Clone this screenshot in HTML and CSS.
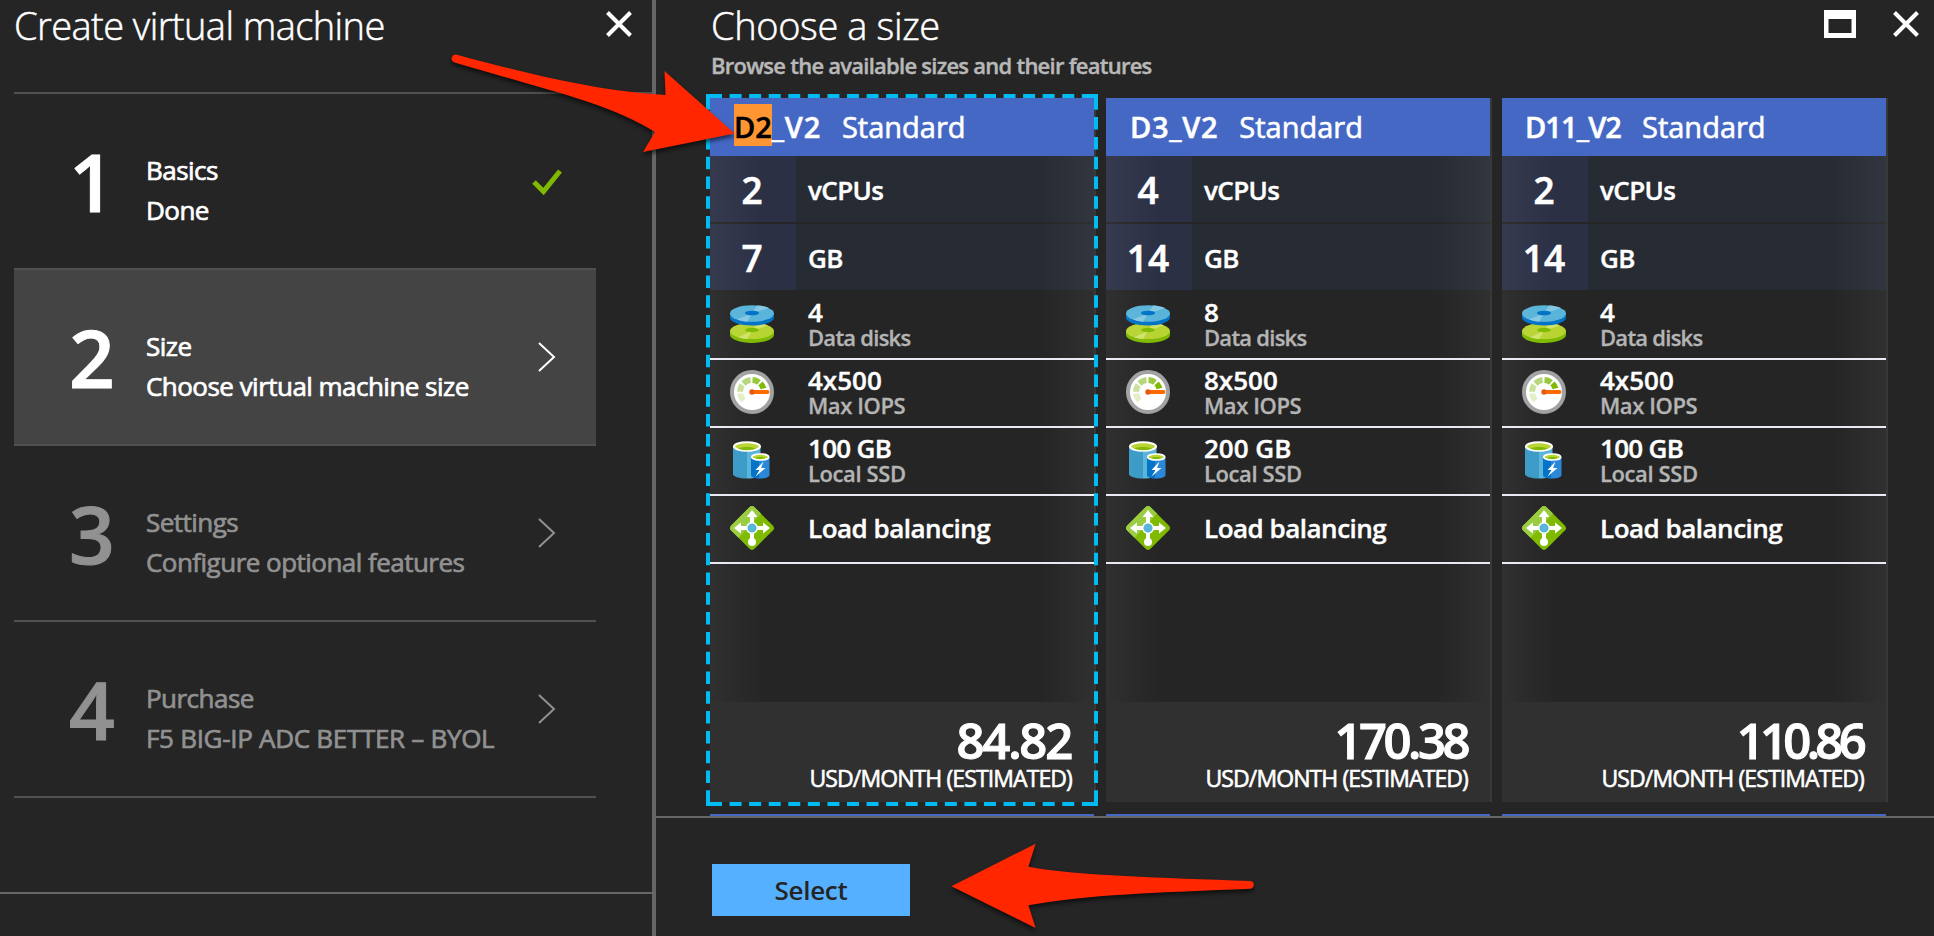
FILE: index.html
```html
<!DOCTYPE html>
<html lang="en">
<head>
<meta charset="utf-8">
<title>Create virtual machine</title>
<link rel="stylesheet" href="styles.css">
</head>
<body>
<svg class="defs" width="0" height="0" aria-hidden="true">
  <symbol id="i-close" viewBox="0 0 26 26"><path d="M1.500 1.500l23 23M24.500 1.500l-23 23" fill="none" stroke="#fff" stroke-width="4"/></symbol>
  <symbol id="i-chevron" viewBox="0 0 18 30"><path d="M1 1l15 14L1 29" fill="none" stroke="currentColor" stroke-width="2"/></symbol>
  <symbol id="i-disks" viewBox="0 0 44 38">
    <path d="M0 26v4c0 4 10 8 22 8s22-4 22-8v-4z" fill="#7fba00"/>
    <ellipse cx="22" cy="26" rx="22" ry="8" fill="#b8d432"/>
    <path d="M22 26L8 32.200c3 1 6 1.600 9 1.800zM22 26l5-7.800c4 .3 8 1 11 2z" fill="#cfe36c"/>
    <ellipse cx="22" cy="25" rx="7" ry="2.200" fill="#7fba00"/>
    <path d="M0 8.500v4C0 17 10 20.500 22 20.500S44 17 44 12.500v-4z" fill="#0072c6"/>
    <ellipse cx="22" cy="8.500" rx="22" ry="8.300" fill="#59b4d9"/>
    <path d="M22 8.500L7 14.500c3 1.200 6 1.800 10 2.200zM22 8.500L27 .4c5 .3 9 1.200 12 2.500z" fill="#85c8e4"/>
    <ellipse cx="22" cy="8" rx="7" ry="2.300" fill="#0072c6"/>
  </symbol>
  <symbol id="i-gauge" viewBox="0 0 44 44">
    <circle cx="22" cy="22" r="20" fill="#fff" stroke="#a0a1a2" stroke-width="4"/>
    <g fill="none" stroke-width="6">
      <path d="M13.500 30.500A12 12 0 0 1 10.100 23.500" stroke="#e2efc6"/>
      <path d="M10 21.800A12 12 0 0 1 12.200 15.100" stroke="#c8e09a"/>
      <path d="M13.500 13.500A12 12 0 0 1 20.500 10.100" stroke="#b5d779"/>
      <path d="M22.500 10A12 12 0 0 1 29 12.300" stroke="#97c83c"/>
      <path d="M30.500 13.500A12 12 0 0 1 33.500 18.500" stroke="#7fba00"/>
    </g>
    <path d="M22 22h15.500" stroke="#ff6a00" stroke-width="4" stroke-linecap="round"/>
    <circle cx="22" cy="22" r="2.700" fill="#e8590c"/>
  </symbol>
  <symbol id="i-storage" viewBox="0 0 44 44">
    <path d="M3 8v28c0 2.500 6 4.500 14 4.500V8z" fill="#3999c6"/>
    <path d="M17 8v32.500c8 0 13.500-2 13.500-4.500V8z" fill="#59b4d9"/>
    <ellipse cx="17" cy="8.500" rx="13" ry="4.300" fill="#b8d432" stroke="#fff" stroke-width="2"/>
    <path d="M8 10.500c4-2 14-2 18 0-4 2.300-14 2.300-18 0z" fill="#7fba00"/>
    <path d="M21 19v18c0 2 3.500 3.500 9 3.500S39.500 39 39.500 37V19z" fill="#2b88d8"/>
    <path d="M21 19v18c0 1.800 3 3.200 8 3.500V19z" fill="#0072c6"/>
    <ellipse cx="30.200" cy="19" rx="8.500" ry="3" fill="#b8d432" stroke="#fff" stroke-width="1.700"/>
    <path d="M25 20c3-1.200 8-1.200 10.500 0-3 1.300-8 1.300-10.500 0z" fill="#7fba00"/>
    <path d="M33.500 23.500L25.500 32h4l-4 6.500 10-8.500h-4.500z" fill="#fff"/>
  </symbol>
  <symbol id="i-balance" viewBox="0 0 44 44">
    <path d="M19.500 1.200a3.600 3.600 0 0 1 5 0L42.800 19.500a3.600 3.600 0 0 1 0 5L24.500 42.800a3.600 3.600 0 0 1-5 0L1.200 24.500a3.600 3.600 0 0 1 0-5z" fill="#7fba00"/>
    <path d="M19.500 1.200a3.600 3.600 0 0 1 5 0L31 7.500 8.500 31.800 1.200 24.500a3.600 3.600 0 0 1 0-5z" fill="#99cc40"/>
    <path d="M22 4l5.500 7H24v8h-4v-8h-3.500zM4 22l7-5.500V20h8v4h-8v3.500zM40 22l-7-5.500V20h-8v4h8v3.500z" fill="#fff"/>
    <path d="M22 24v10" stroke="#fff" stroke-width="4"/>
    <circle cx="22" cy="36" r="4" fill="#fff"/>
    <circle cx="22" cy="22" r="5.300" fill="#59b4d9" stroke="#fff" stroke-width="1.500"/>
  </symbol>
</svg>

<div class="portal">
  <section class="blade steps-blade">
    <header class="blade-head">
      <h1 class="title title-create">Create virtual machine</h1>
      <svg class="close"><use href="#i-close"/></svg>
    </header>
    <ol class="steps">
      <li class="step">
        <span class="num">1</span>
        <div class="label"><span>Basics</span><span>Done</span></div>
        <svg class="check" viewBox="0 0 30 26"><path d="M2 13l9.500 9.500L28 2" fill="none" stroke="#7fba00" stroke-width="5"/></svg>
      </li>
      <li class="step active">
        <span class="num">2</span>
        <div class="label"><span>Size</span><span>Choose virtual machine size</span></div>
        <svg class="chevron"><use href="#i-chevron"/></svg>
      </li>
      <li class="step disabled">
        <span class="num">3</span>
        <div class="label"><span>Settings</span><span>Configure optional features</span></div>
        <svg class="chevron"><use href="#i-chevron"/></svg>
      </li>
      <li class="step disabled">
        <span class="num">4</span>
        <div class="label"><span>Purchase</span><span class="product">F5 BIG-IP ADC BETTER – BYOL</span></div>
        <svg class="chevron"><use href="#i-chevron"/></svg>
      </li>
    </ol>
    <footer class="steps-foot"></footer>
  </section>

  <section class="blade size-blade">
    <header class="size-head">
      <div>
        <h1 class="title title-size">Choose a size</h1>
        <p class="subtitle">Browse the available sizes and their features</p>
      </div>
      <div class="window-tools">
        <svg class="maximize" viewBox="0 0 32 28"><path d="M0 0h32v28H0zM4.500 9v14h23V9z" fill="#fff" fill-rule="evenodd"/></svg>
        <svg class="close"><use href="#i-close"/></svg>
      </div>
    </header>

    <div class="cards">
      <article class="card">
        <h2 class="card-head"><b><mark>D2</mark>_V2</b><span>Standard</span></h2>
        <div class="card-body">
          <div class="spec"><span class="qty">2</span><span class="unit">vCPUs</span></div>
          <div class="spec"><span class="qty">7</span><span class="unit">GB</span></div>
          <div class="feature"><svg class="icon disks"><use href="#i-disks"/></svg><div><b>4</b><small class="tight">Data disks</small></div></div>
          <div class="feature"><svg class="icon"><use href="#i-gauge"/></svg><div><b>4x500</b><small>Max IOPS</small></div></div>
          <div class="feature"><svg class="icon"><use href="#i-storage"/></svg><div><b class="tight">100 GB</b><small>Local SSD</small></div></div>
          <div class="feature"><svg class="icon"><use href="#i-balance"/></svg><div><b class="snug">Load balancing</b></div></div>
        </div>
        <div class="price"><strong>84.82</strong><span>USD/MONTH (ESTIMATED)</span></div>
        <svg class="selection" viewBox="0 0 392 712">
          <g fill="none" stroke="#00bcf2" stroke-width="4">
            <path d="M4 2H388M4 710H388" stroke-dasharray="12 7.570"/>
            <path d="M2 3.300V709M390 3.300V709" stroke-dasharray="12.500 7.300"/>
            <path d="M0 2H5M2 0V5M387 2H392M390 0V5M0 710H5M2 707V712M387 710H392M390 707V712"/>
          </g>
        </svg>
      </article>

      <article class="card">
        <h2 class="card-head"><b>D3_V2</b><span>Standard</span></h2>
        <div class="card-body">
          <div class="spec"><span class="qty">4</span><span class="unit">vCPUs</span></div>
          <div class="spec"><span class="qty">14</span><span class="unit">GB</span></div>
          <div class="feature"><svg class="icon disks"><use href="#i-disks"/></svg><div><b>8</b><small class="tight">Data disks</small></div></div>
          <div class="feature"><svg class="icon"><use href="#i-gauge"/></svg><div><b>8x500</b><small>Max IOPS</small></div></div>
          <div class="feature"><svg class="icon"><use href="#i-storage"/></svg><div><b>200 GB</b><small>Local SSD</small></div></div>
          <div class="feature"><svg class="icon"><use href="#i-balance"/></svg><div><b class="snug">Load balancing</b></div></div>
        </div>
        <div class="price"><strong class="narrow-1">170.38</strong><span>USD/MONTH (ESTIMATED)</span></div>
      </article>

      <article class="card">
        <h2 class="card-head"><b class="long-name">D11_V2</b><span>Standard</span></h2>
        <div class="card-body">
          <div class="spec"><span class="qty">2</span><span class="unit">vCPUs</span></div>
          <div class="spec"><span class="qty">14</span><span class="unit">GB</span></div>
          <div class="feature"><svg class="icon disks"><use href="#i-disks"/></svg><div><b>4</b><small class="tight">Data disks</small></div></div>
          <div class="feature"><svg class="icon"><use href="#i-gauge"/></svg><div><b>4x500</b><small>Max IOPS</small></div></div>
          <div class="feature"><svg class="icon"><use href="#i-storage"/></svg><div><b class="tight">100 GB</b><small>Local SSD</small></div></div>
          <div class="feature"><svg class="icon"><use href="#i-balance"/></svg><div><b class="snug">Load balancing</b></div></div>
        </div>
        <div class="price"><strong class="narrow-2">110.86</strong><span>USD/MONTH (ESTIMATED)</span></div>
      </article>

      <div class="next-card"></div>
      <div class="next-card"></div>
      <div class="next-card"></div>
    </div>

    <footer class="size-foot"><button class="select" type="button">Select</button></footer>
  </section>

  <svg class="arrows" viewBox="0 0 1934 936" aria-hidden="true">
    <g fill="#ff2600">
      <path d="M457 54.700C520 72 600 92 665.500 95L664.500 71L734.600 133.500L643 152L655 132C610 103 540 88 454.500 62.500A4 4 0 0 1 457 54.700z"/>
      <path d="M951.400 886.300L1035.600 843.700L1028.400 866.700C1080 876 1160 877.500 1250.500 881A3.900 3.900 0 0 1 1250.500 888.700C1160 892.500 1085 894.500 1028.400 905.300L1035.600 928z"/>
    </g>
  </svg>
</div>
</body>
</html>
```

FILE: styles.css
```css
* { box-sizing: border-box; }
body { margin: 0; background: #252525; color: #fff; font-family: "Open Sans", "Noto Sans", sans-serif; overflow: hidden; }
h1, h2, p, ol { margin: 0; padding: 0; font-weight: 400; }
.defs { position: absolute; }
.portal { position: relative; display: flex; width: 1934px; height: 936px; overflow: hidden; }
.blade { display: flex; flex-direction: column; }
.steps-blade { width: 656px; border-right: 4px solid #666; }
.blade-head { display: flex; justify-content: space-between; height: 92px; padding: 0 20px 0 14px; }
.title { height: 52px; font-size: 38px; line-height: 50px; font-weight: 300; white-space: nowrap; -webkit-text-stroke: .5px currentColor; }
.title-create { letter-spacing: -.58px; }
.title-size { letter-spacing: -.38px; margin-left: -1px; }
.close { width: 26px; height: 26px; margin-top: 11px; }

.steps { list-style: none; margin-left: 14px; height: 800px; border-top: 2px solid #505050; }
.step { display: flex; width: 582px; height: 176px; border-bottom: 2px solid #505050; }
.num { width: 132px; padding-left: 55px; font-size: 80px; line-height: 174px; font-weight: 600; -webkit-text-stroke: 1px currentColor; }
.label { display: flex; flex-direction: column; width: 387px; padding-top: 56px; font-size: 26px; line-height: 40px; font-weight: 400; letter-spacing: -.53px; white-space: nowrap; -webkit-text-stroke: .7px currentColor; }
.product { letter-spacing: -.3px; }
.check { width: 30px; height: 26px; margin: 75px 0 0 -1px; }
.chevron { width: 18px; height: 30px; margin: 72px 0 0 5px; }
.active { background: #444; }
.disabled { color: #919191; }
.steps-foot { height: 44px; border-top: 2px solid #666; }

.size-blade { flex: 1; }
.size-head { display: flex; justify-content: space-between; height: 98px; padding: 0 15px 0 56px; }
.subtitle { margin-left: -1px; font-size: 22px; line-height: 27px; font-weight: 600; letter-spacing: -.75px; color: #b8b8b8; white-space: nowrap; -webkit-text-stroke: .4px currentColor; }
.window-tools { display: flex; gap: 37px; }
.maximize { width: 32px; height: 28px; margin-top: 10px; }
.cards { display: grid; grid-template-columns: repeat(3, 384px); grid-template-rows: 704px 2px; gap: 12px; height: 718px; padding-left: 54px; }
.card { position: relative; display: flex; flex-direction: column; box-shadow: 2px 0 0 #383838; }
.card-head { display: flex; gap: 21px; height: 58px; padding-left: 24px; background: #4668c5; font-size: 29px; line-height: 58px; white-space: nowrap; }
.card-head b { font-weight: 600; letter-spacing: .7px; -webkit-text-stroke: .5px currentColor; }
.card-head .long-name { letter-spacing: -.9px; margin-left: -1px; }
.card-head span { font-weight: 400; -webkit-text-stroke: .6px currentColor; }
mark { display: inline-block; height: 42px; margin-top: 6px; line-height: 46px; background: #ff9632; color: #000; letter-spacing: 0; }
.card-body { position: relative; height: 546px; }
.card-body::after { content: ""; position: absolute; inset: 0; background: linear-gradient(90deg, rgba(255,255,255,.05), rgba(255,255,255,0) 54px, rgba(255,255,255,0) 330px, rgba(255,255,255,.05)); }
.spec { display: flex; height: 66px; background: #272b34; }
.spec + .spec { margin-top: 2px; }
.qty { width: 86px; padding-right: 2px; background: #2b3045; text-align: center; font-size: 37px; line-height: 67px; font-weight: 600; -webkit-text-stroke: .6px currentColor; }
.unit { padding-left: 12px; font-size: 26px; line-height: 69px; font-weight: 600; letter-spacing: -.6px; -webkit-text-stroke: .4px currentColor; }
.feature { display: flex; height: 70px; padding: 12px 0 0 20px; border-bottom: 2px solid #ece8f3; }
.feature + .feature { height: 68px; padding-top: 10px; }
.icon { width: 44px; height: 44px; margin-right: 34px; }
.icon.disks { height: 38px; margin-top: 3px; }
.feature div { display: flex; flex-direction: column; white-space: nowrap; }
.feature b { margin-top: -3px; font-size: 26px; line-height: 26px; font-weight: 600; -webkit-text-stroke: .4px currentColor; }
.feature b.tight { letter-spacing: -.7px; }
.feature b.snug { margin-top: 0; line-height: 44px; letter-spacing: -.5px; }
.feature small { font-size: 22px; line-height: 24px; font-weight: 600; letter-spacing: -.4px; color: #b4b4b4; -webkit-text-stroke: .3px currentColor; }
.feature small.tight { letter-spacing: -.75px; }
.price { display: flex; flex-direction: column; height: 100px; padding: 9px 22px 0 0; background: #303030; text-align: right; }
.price strong { margin-right: 1px; font-size: 49px; line-height: 58px; font-weight: 600; letter-spacing: -2.200px; -webkit-text-stroke: 1px currentColor; }
.price .narrow-1 { letter-spacing: -3.500px; }
.price .narrow-2 { letter-spacing: -4.700px; margin-right: 2px; }
.price span { font-size: 23px; line-height: 18px; font-weight: 400; letter-spacing: -.9px; -webkit-text-stroke: .6px currentColor; }
.selection { position: absolute; left: -4px; top: -4px; width: 392px; height: 712px; }
.next-card { background: #4668c5; }
.size-foot { height: 120px; padding: 46px 0 0 56px; border-top: 2px solid #666; }
.select { width: 198px; height: 52px; padding: 0; border: 0; background: #55b1ff; color: #252525; font: 600 26px/52px "Open Sans", "Noto Sans", sans-serif; letter-spacing: -.3px; }
.arrows { position: absolute; inset: 0; width: 1934px; height: 936px; filter: drop-shadow(0 3px 2px rgba(0,0,0,.6)); pointer-events: none; }
```
